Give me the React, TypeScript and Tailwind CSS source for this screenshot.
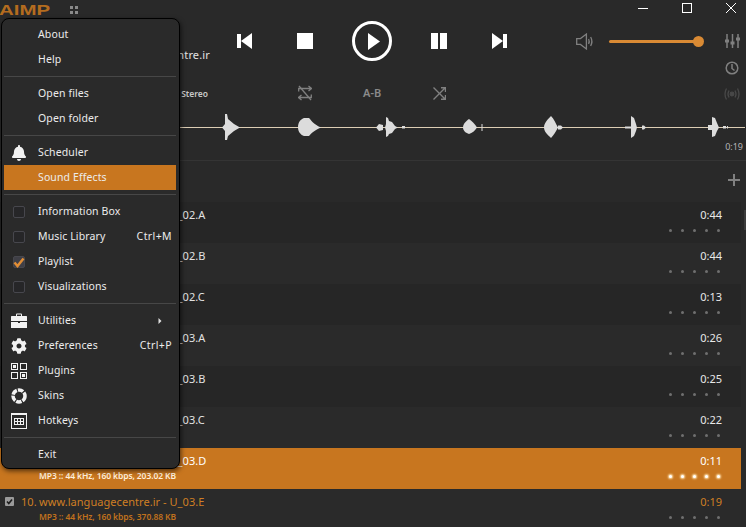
import React from "react";
import { FaBell, FaCog } from "react-icons/fa";

const tracks = [
  { n: 3, name: "U_02.A", time: "0:44", info: "MP3 :: 44 kHz, 160 kbps, 704.12 KB" },
  { n: 4, name: "U_02.B", time: "0:44", info: "MP3 :: 44 kHz, 160 kbps, 702.50 KB" },
  { n: 5, name: "U_02.C", time: "0:13", info: "MP3 :: 44 kHz, 160 kbps, 210.44 KB" },
  { n: 6, name: "U_03.A", time: "0:26", info: "MP3 :: 44 kHz, 160 kbps, 416.30 KB" },
  { n: 7, name: "U_03.B", time: "0:25", info: "MP3 :: 44 kHz, 160 kbps, 400.18 KB" },
  { n: 8, name: "U_03.C", time: "0:22", info: "MP3 :: 44 kHz, 160 kbps, 352.76 KB" },
  { n: 9, name: "U_03.D", time: "0:11", info: "MP3 :: 44 kHz, 160 kbps, 203.02 KB", selected: true },
  { n: 10, name: "U_03.E", time: "0:19", info: "MP3 :: 44 kHz, 160 kbps, 370.88 KB", playing: true },
];

function Track({ n, name, time, info, selected, playing, odd }: any) {
  const bg = selected ? "bg-[#c8761f]" : odd ? "bg-[#2a2a2a]" : "bg-[#262626]";
  const title = selected ? "text-white" : playing ? "text-[#cf7f24]" : "text-[#e2e2e2]";
  const sub = selected ? "text-[#fff0dc]" : "text-[#c0711d]";
  return (
    <div className={`relative flex h-[41px] w-[741px] shrink-0 pl-[5px] pr-[19px] ${bg}`}>
      <div className="mt-[8px] flex h-[9px] w-[9px] items-center justify-center rounded-[1px] bg-[#9a9a9a]">
        <svg viewBox="0 0 9 9" className="h-[9px] w-[9px]">
          <path d="M2 4.500 L3.800 6.500 L7 2.500" fill="none" stroke="#1c1c1c" strokeWidth="1.600" />
        </svg>
      </div>
      <div className="ml-[7px] flex-1">
        <div className={`mt-[4px] flex h-[18px] items-center text-[11px] tracking-[0.05px] ${title}`}>
          <span className="w-[18px] shrink-0">{n}.</span>
          <span>www.languagecentre.ir - {name}</span>
        </div>
        <div className={`ml-[18px] mt-[-1px] text-[8.5px] font-semibold leading-[13px] tracking-[-0.1px] ${sub}`}>{info}</div>
      </div>
      <div className="flex flex-col items-end">
        <div className={`mt-[4px] flex h-[18px] items-center text-[11px] ${playing ? "text-[#cf7f24]" : selected ? "text-white" : "text-[#e8e8e8]"}`}>
          {time}
        </div>
        <div className="mt-[5px] flex gap-[9px] pr-[2px]">
          {[0, 1, 2, 3, 4].map((i) => (
            <span
              key={i}
              className={`h-[3px] w-[3px] rounded-full ${selected ? "bg-white shadow-[0_0_2px_1px_#ffe2b0]" : "bg-[#6f6f6f]"}`}
            />
          ))}
        </div>
      </div>
    </div>
  );
}

function Waveform() {
  const shapes = [
    "M222 127.500 L225 124 L225 114 L227 114 L228 119 L234 124 L240 127.500 L234 131 L228 136 L227 140 L225 140 L225 131Z",
    "M298 127.500 C298 122 301 119 304 118 L309 118 C311 120 313 124 321 127.500 C313 131 311 134 309 136 L304 136 C301 135 298 132 298 127.500Z",
    "M376 127.500 L379 124 L383 125 L383 130 L379 131Z",
    "M385 127.500 L386 124 L386 117 L388 118 L389 121 L392 122 L395 126 L398 127.500 L395 129 L392 133 L389 134 L388 136 L386 137 L386 131Z",
    "M402 126 L405 126 L405 128.500 L402 128.500Z",
    "M463 127.500 C463 124 466 121 469 119 C472 121 475 124 477 127.500 C475 131 472 133 469 134 C466 133 463 131 463 127.500Z",
    "M481.500 124 L482.500 124 L482.500 131 L481.500 131Z",
    "M544 127.500 C544 123 548 119 551 116 C554 119 556 124 558 127.500 C556 131 554 135 551 138 C548 135 544 132 544 127.500Z",
    "M558 125.500 L561 125.500 L563 127.500 L561 129.500 L558 129.500Z",
    "M625 126.500 L631 126.500 L631 116 L634 118 L636 124 L637 127.500 L636 131 L634 136 L631 138 L631 128.500 L625 128.500Z",
    "M642 125.500 L644 125.500 L646 127.500 L644 129.500 L642 129.500Z",
    "M708 125 L712 125 L712 117 L715 118 L717 123 L719 127.500 L717 131 L715 136 L712 137 L712 130 L708 130Z",
    "M723 126 L726 126 L726 128.500 L723 128.500Z",
    "M727 126 L728 126 L728 128.500 L727 128.500Z",
  ];
  return (
    <svg width="566" height="40" viewBox="180 105 566 40" className="ml-[180px] block">
      <rect x="180" y="127" width="565" height="1" fill="#dccdb4" />
      {shapes.map((d, i) => (
        <path key={i} d={d} fill="#dcdcdc" />
      ))}
    </svg>
  );
}

function Check({ on }: { on?: boolean }) {
  return (
    <span className={`relative block h-[12px] w-[12px] rounded-[2px] border border-[#47474d] ${on ? "bg-[#3f3f46]" : "bg-[#262628]"}`}>
      {on && (
        <svg viewBox="0 0 12 12" className="absolute left-[-1px] top-[-1px] h-[12px] w-[12px]">
          <path d="M1.500 6.500 L4.500 10 L10.500 2.500" fill="none" stroke="#e08d35" strokeWidth="2.500" />
        </svg>
      )}
    </span>
  );
}

const Briefcase = () => (
  <svg width="16" height="15" viewBox="0 0 16 15" fill="#f2f2f2">
    <path d="M5 3 V1.500 Q5 0.500 6 0.500 H10 Q11 0.500 11 1.500 V3 H10 V1.500 H6 V3Z" />
    <path d="M0 3.500 Q0 3 0.500 3 H15.500 Q16 3 16 3.500 V8 H0Z" />
    <path d="M0 9 H7 V10 H9 V9 H16 V15 H0Z" />
  </svg>
);

const Plugins = () => (
  <svg width="16" height="16" viewBox="0 0 16 16">
    <g fill="none" stroke="#f2f2f2" strokeWidth="1">
      <rect x="0.500" y="0.500" width="6" height="6" />
      <rect x="9.500" y="0.500" width="6" height="6" />
      <rect x="0.500" y="9.500" width="6" height="6" />
      <rect x="9.500" y="9.500" width="6" height="6" />
    </g>
    <rect x="2" y="2" width="3" height="3" fill="#f2f2f2" />
    <rect x="11" y="11" width="3" height="3" fill="#f2f2f2" />
  </svg>
);

const Skins = () => (
  <svg width="16" height="16" viewBox="0 0 16 16">
    <circle cx="8" cy="8" r="6" fill="none" stroke="#f2f2f2" strokeWidth="3.500" strokeDasharray="5.500 1.100" />
  </svg>
);

const Hotkeys = () => (
  <svg width="16" height="16" viewBox="0 0 16 16">
    <rect x="0.500" y="0.500" width="15" height="15" fill="none" stroke="#f2f2f2" />
    <rect x="0" y="0" width="16" height="2" fill="#f2f2f2" />
    <g fill="none" stroke="#f2f2f2" strokeWidth="1">
      <rect x="3.500" y="5.500" width="9" height="6" />
      <path d="M6.500 5.500 V11.500 M9.500 5.500 V11.500 M3.500 8.500 H12.500" />
    </g>
  </svg>
);

function Item({ label, icon, shortcut, active, arrow }: any) {
  return (
    <div className={`flex h-[25px] items-center text-[10.5px] tracking-[0.12px] text-[#ececec] ${active ? "bg-[#c8761f]" : ""}`}>
      <span className="flex w-[34px] shrink-0 items-center justify-center pr-[4px]">{icon}</span>
      <span className="flex-1">{label}</span>
      {shortcut && <span className="pr-[4px] tracking-[0.4px]">{shortcut}</span>}
      {arrow && (
        <svg width="4" height="6" viewBox="0 0 4 6" className="mr-[14px]">
          <path d="M0.500 0 L3.500 3 L0.500 6Z" fill="#e0e0e0" />
        </svg>
      )}
    </div>
  );
}

const Sep = () => (
  <div className="h-[9px] pt-[4px]">
    <div className="h-px bg-[#474747]" />
  </div>
);

function Menu() {
  return (
    <div className="absolute left-[1px] top-[18px] h-[451px] w-[179px] rounded-[8px] border border-black bg-[#2a2a2a] px-[2px] py-[3px] shadow-[1px_2px_5px_rgba(0,0,0,0.6)]">
      <div className="w-[172px]">
        <Item label="About" />
        <Item label="Help" />
        <Sep />
        <Item label="Open files" />
        <Item label="Open folder" />
        <Sep />
        <Item label="Scheduler" icon={<FaBell className="h-[16px] w-[16px] text-[#f2f2f2]" />} />
        <Item label="Sound Effects" active />
        <Sep />
        <Item label="Information Box" icon={<Check />} />
        <Item label="Music Library" icon={<Check />} shortcut="Ctrl+M" />
        <Item label="Playlist" icon={<Check on />} />
        <Item label="Visualizations" icon={<Check />} />
        <Sep />
        <Item label="Utilities" icon={<Briefcase />} arrow />
        <Item label="Preferences" icon={<FaCog className="h-[16px] w-[16px] text-[#f2f2f2]" />} shortcut="Ctrl+P" />
        <Item label="Plugins" icon={<Plugins />} />
        <Item label="Skins" icon={<Skins />} />
        <Item label="Hotkeys" icon={<Hotkeys />} />
        <Sep />
        <Item label="Exit" />
      </div>
    </div>
  );
}

function Transport() {
  return (
    <div className="flex h-[40px] items-center pl-[27px]">
      <svg width="15" height="16" viewBox="0 0 15 16" fill="#fff">
        <rect x="0" y="1" width="4" height="14" />
        <path d="M4 8 L15 0 V16Z" />
      </svg>
      <svg width="16" height="16" viewBox="0 0 16 16" fill="#fff" className="ml-[45px]">
        <rect width="16" height="16" />
      </svg>
      <svg width="40" height="40" viewBox="0 0 40 40" className="ml-[39px]">
        <circle cx="20" cy="20" r="18.500" fill="none" stroke="#fff" strokeWidth="3" />
        <path d="M16 12 L28 20.500 L16 29Z" fill="#fff" />
      </svg>
      <svg width="16" height="16" viewBox="0 0 16 16" fill="#fff" className="ml-[39px]">
        <rect width="7" height="16" />
        <rect x="9" width="7" height="16" />
      </svg>
      <svg width="15" height="16" viewBox="0 0 15 16" fill="#fff" className="ml-[45px]">
        <path d="M0 0 L11 8 L0 16Z" />
        <rect x="11" y="1" width="4" height="14" />
      </svg>
    </div>
  );
}

function Modes() {
  return (
    <div className="mt-[24px] flex h-[16px] items-center pl-[88px] text-[11px] font-semibold text-[#8a8a8a]">
      <svg width="14" height="16" viewBox="0 0 14 16" fill="none" stroke="#808080" strokeWidth="1.300">
        <path d="M0.700 6.500 V3.500 H13 M10.500 1 L13.500 3.500 L10.500 6" />
        <path d="M13.300 9.500 V12.500 H1 M3.500 10 L0.500 12.500 L3.500 15" />
        <path d="M1 1 L13 15" />
      </svg>
      <span className="ml-[51px] w-[18px] whitespace-nowrap">A-B</span>
      <svg width="13" height="13" viewBox="0 0 13 13" fill="none" stroke="#808080" strokeWidth="1.400" className="ml-[52px]">
        <path d="M0.500 0.500 L12 12 M8 12.300 H12.500 V8" />
        <path d="M0.500 12.500 L12 1 M8 0.700 H12.500 V5" />
      </svg>
    </div>
  );
}

function Volume() {
  return (
    <div className="flex w-[236px] pl-[66px]">
      <div className="flex h-[40px] w-[123px] shrink-0 items-center">
        <svg width="18" height="17" viewBox="0 0 18 17" fill="none" stroke="#808080" strokeWidth="1.300">
          <path d="M0.700 5.500 H4.500 L10.500 1 V16 L4.500 11.500 H0.700Z" />
          <path d="M12.700 6 Q14 8.500 12.700 11" />
          <path d="M14.800 4 Q17.300 8.500 14.800 13" />
        </svg>
        <div className="relative ml-[15px] h-[3px] w-[91px] rounded-full bg-[#d98a34]">
          <span className="absolute right-[-5px] top-[-4px] h-[11px] w-[11px] rounded-full bg-[#d98a34]" />
        </div>
      </div>
      <div className="ml-[25px] flex flex-col items-center pt-[13px]">
        <svg width="15" height="14" viewBox="0 0 15 14" stroke="#808080" strokeWidth="1.500" fill="#808080">
          <path d="M2 0 V14 M7.500 0 V14 M13 0 V14" />
          <rect x="0.500" y="6" width="3" height="2" strokeWidth="1" />
          <rect x="6" y="8" width="3" height="2" strokeWidth="1" />
          <rect x="11.500" y="4" width="3" height="2" strokeWidth="1" />
        </svg>
        <svg width="14" height="14" viewBox="0 0 14 14" fill="none" stroke="#808080" strokeWidth="1.500" className="mt-[13px]">
          <circle cx="7" cy="7" r="5.800" />
          <path d="M7 3 V7.500 L9.500 9.500" />
        </svg>
        <svg width="16" height="12" viewBox="0 0 16 12" fill="none" stroke="#484848" strokeWidth="1.300" className="mt-[13px]">
          <circle cx="8" cy="6" r="1.800" fill="#484848" />
          <path d="M5 2.500 Q3 6 5 9.500 M11 2.500 Q13 6 11 9.500" />
          <path d="M2.500 0.500 Q-0.500 6 2.500 11.500 M13.500 0.500 Q16.500 6 13.500 11.500" />
        </svg>
      </div>
    </div>
  );
}

function Header() {
  return (
    <div className="h-[161px] shrink-0 border-b border-[#343434]">
      <div className="flex h-[21px] items-start justify-between">
        <div className="flex items-start">
          <span className="ml-[-1px] mt-[1px] block w-[52px] origin-left scale-x-[1.32] text-[15.500px] font-bold leading-[18px] text-[#b46c1f] [font-family:'Liberation_Sans',sans-serif]">
            AIMP
          </span>
          <span className="ml-[19px] mt-[6px] grid grid-cols-2 gap-[2px]">
            <i className="h-[3px] w-[3px] bg-[#8a8a8a]" />
            <i className="h-[3px] w-[3px] bg-[#8a8a8a]" />
            <i className="h-[3px] w-[3px] bg-[#8a8a8a]" />
            <i className="h-[3px] w-[3px] bg-[#8a8a8a]" />
          </span>
        </div>
        <div className="flex pr-[10px] pt-[3px]">
          <div className="mt-[5px] h-px w-[10px] bg-white" />
          <div className="ml-[34px] h-[10px] w-[10px] border border-white" />
          <svg width="10" height="10" viewBox="0 0 10 10" stroke="#fff" strokeWidth="1" className="ml-[34px]">
            <path d="M0 0 L10 10 M10 0 L0 10" />
          </svg>
        </div>
      </div>
      <div className="flex h-[84px]">
        <div className="w-[210px] shrink-0 text-right">
          <div className="mt-[26px] text-[11px] leading-[16px] tracking-[0.15px] text-[#e2e2e2]">www.languagecentre.ir</div>
          <div className="mt-[24px] pr-[2px] text-[8.5px] font-semibold leading-[13px] text-[#c8c8c8]">
            MP3 :: 44 kHz, 160 kbps, Stereo
          </div>
        </div>
        <div className="w-[300px] shrink-0">
          <Transport />
          <Modes />
        </div>
        <Volume />
      </div>
      <Waveform />
      <div className="mt-[-4px] flex justify-end pr-[3px] text-[9px] leading-[12px] text-[#b4b4b4]">0:19</div>
    </div>
  );
}

export default function App() {
  return (
    <div className="relative flex h-[527px] w-[746px] flex-col overflow-hidden bg-[#292929] font-['Noto_Sans',sans-serif]">
      <Header />
      <div className="flex h-[41px] shrink-0 items-start justify-end pr-[6px] pt-[13px]">
        <svg width="12" height="12" viewBox="0 0 12 12" stroke="#808080" strokeWidth="2">
          <path d="M6 0 V12 M0 6 H12" />
        </svg>
      </div>
      <div className="flex flex-col">
        {tracks.map((t, i) => (
          <Track key={t.n} {...t} odd={i % 2 === 1} />
        ))}
      </div>
      <div className="absolute right-0 top-[210px] h-[20px] w-[2px] bg-[#3c3c3c]" />
      <Menu />
    </div>
  );
}
